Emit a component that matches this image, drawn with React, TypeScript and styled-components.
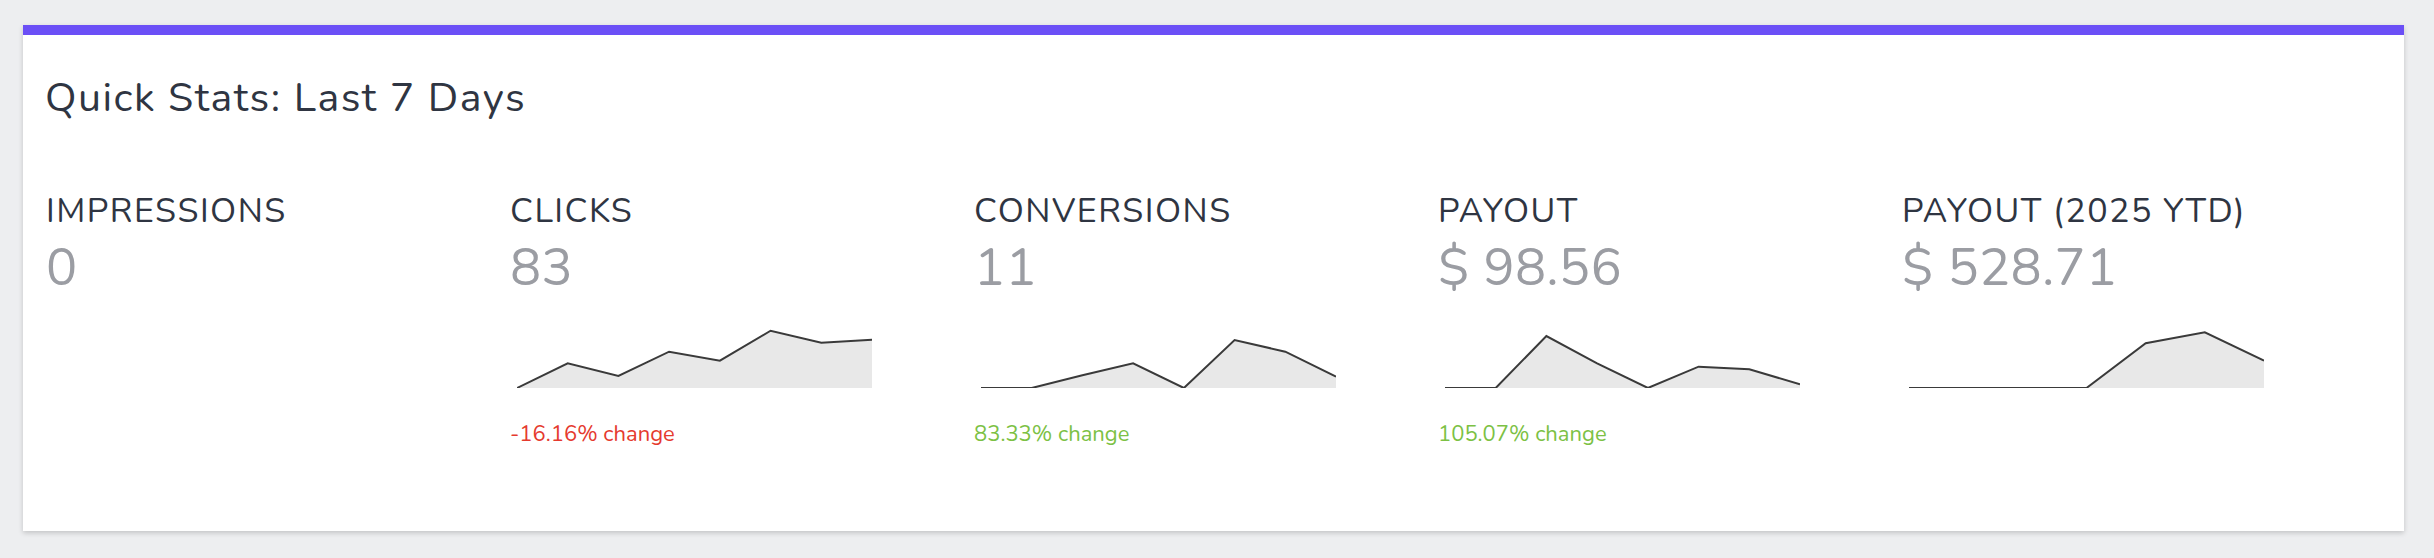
import React from "react";
import styled, { createGlobalStyle } from "styled-components";

const GlobalStyle = createGlobalStyle`
  html, body {
    margin: 0;
    padding: 0;
    background: #edeef0;
    font-family: "Nunito", Lato, "Open Sans", sans-serif;
  }
`;

const Page = styled.div`
  padding: 25px 30px 26px 23px;
`;

const Card = styled.section`
  background: #ffffff;
  border-top: 10px solid #6b4ff6;
  box-shadow: 0 2px 5px rgba(0, 0, 0, 0.18);
  padding-bottom: 84px;
`;

const Title = styled.h2`
  margin: 0;
  padding: 39px 22px 0;
  font-size: 41px;
  line-height: 48px;
  letter-spacing: 1.5px;
  font-weight: 400;
  color: #2f3542;
`;

const StatsRow = styled.div`
  display: grid;
  grid-template-columns: repeat(5, 464px);
  padding: 69px 0 0 23px;
`;

const Stat = styled.div`
  display: flex;
  flex-direction: column;
  align-items: flex-start;
`;

const Label = styled.div`
  font-size: 34px;
  line-height: 40px;
  letter-spacing: 1.5px;
  color: #2f3542;
  text-transform: uppercase;
  white-space: nowrap;
`;

const Value = styled.div`
  margin-top: 7px;
  font-size: 52px;
  line-height: 60px;
  letter-spacing: 0.4px;
  color: #9b9da3;
  white-space: nowrap;
`;

const Spark = styled.svg`
  display: block;
  margin: 20px 0 0 7px;
  overflow: hidden;
`;

const Change = styled.div<{ $up: boolean }>`
  margin-top: 33px;
  font-size: 22px;
  line-height: 26px;
  color: ${(p) => (p.$up ? "#7cc144" : "#e53a2e")};
`;

type Series = { width: number; ys: number[] };

const CHART_H = 70;

// sparkline: line over a light grey area, flat values sit on the bottom edge
const Sparkline = ({ width, ys }: Series) => {
  const step = width / (ys.length - 1);
  const pts = ys.map((y, i) => `${(i * step).toFixed(1)},${y}`);
  const area = `0,${CHART_H} ${pts.join(" ")} ${width},${CHART_H}`;
  return (
    <Spark width={width} height={CHART_H} viewBox={`0 0 ${width} ${CHART_H}`}>
      <polygon points={area} fill="#e8e8e8" />
      <polyline
        points={pts.join(" ")}
        fill="none"
        stroke="#3a3a3a"
        strokeWidth={2}
        strokeLinejoin="miter"
      />
    </Spark>
  );
};

type StatItem = {
  label: string;
  value: string;
  chart?: Series;
  change?: number;
};

const stats: StatItem[] = [
  { label: "Impressions", value: "0" },
  {
    label: "Clicks",
    value: "83",
    chart: { width: 355, ys: [70, 45.3, 58, 33.7, 42.7, 12.7, 24.7, 21.7] },
    change: -16.16
  },
  {
    label: "Conversions",
    value: "11",
    chart: { width: 355, ys: [70, 70, 57.3, 45.3, 70, 22, 33.7, 58.7] },
    change: 83.33
  },
  {
    label: "Payout",
    value: "$ 98.56",
    chart: { width: 355, ys: [70, 70, 18, 45.3, 70, 48.7, 51.3, 66.3] },
    change: 105.07
  },
  {
    label: "Payout (2025 YTD)",
    value: "$ 528.71",
    chart: { width: 355, ys: [70, 70, 70, 70, 25.3, 14.3, 42.7] }
  }
];

const App = () => {
  return (
    <>
      <GlobalStyle />
      <Page>
        <Card>
          <Title>Quick Stats: Last 7 Days</Title>
          <StatsRow>
            {stats.map((s) => (
              <Stat key={s.label}>
                <Label>{s.label}</Label>
                <Value>{s.value}</Value>
                {s.chart && <Sparkline {...s.chart} />}
                {s.change !== undefined && (
                  <Change $up={s.change >= 0}>
                    {s.change.toFixed(2)}% change
                  </Change>
                )}
              </Stat>
            ))}
          </StatsRow>
        </Card>
      </Page>
    </>
  );
};

export default App;
